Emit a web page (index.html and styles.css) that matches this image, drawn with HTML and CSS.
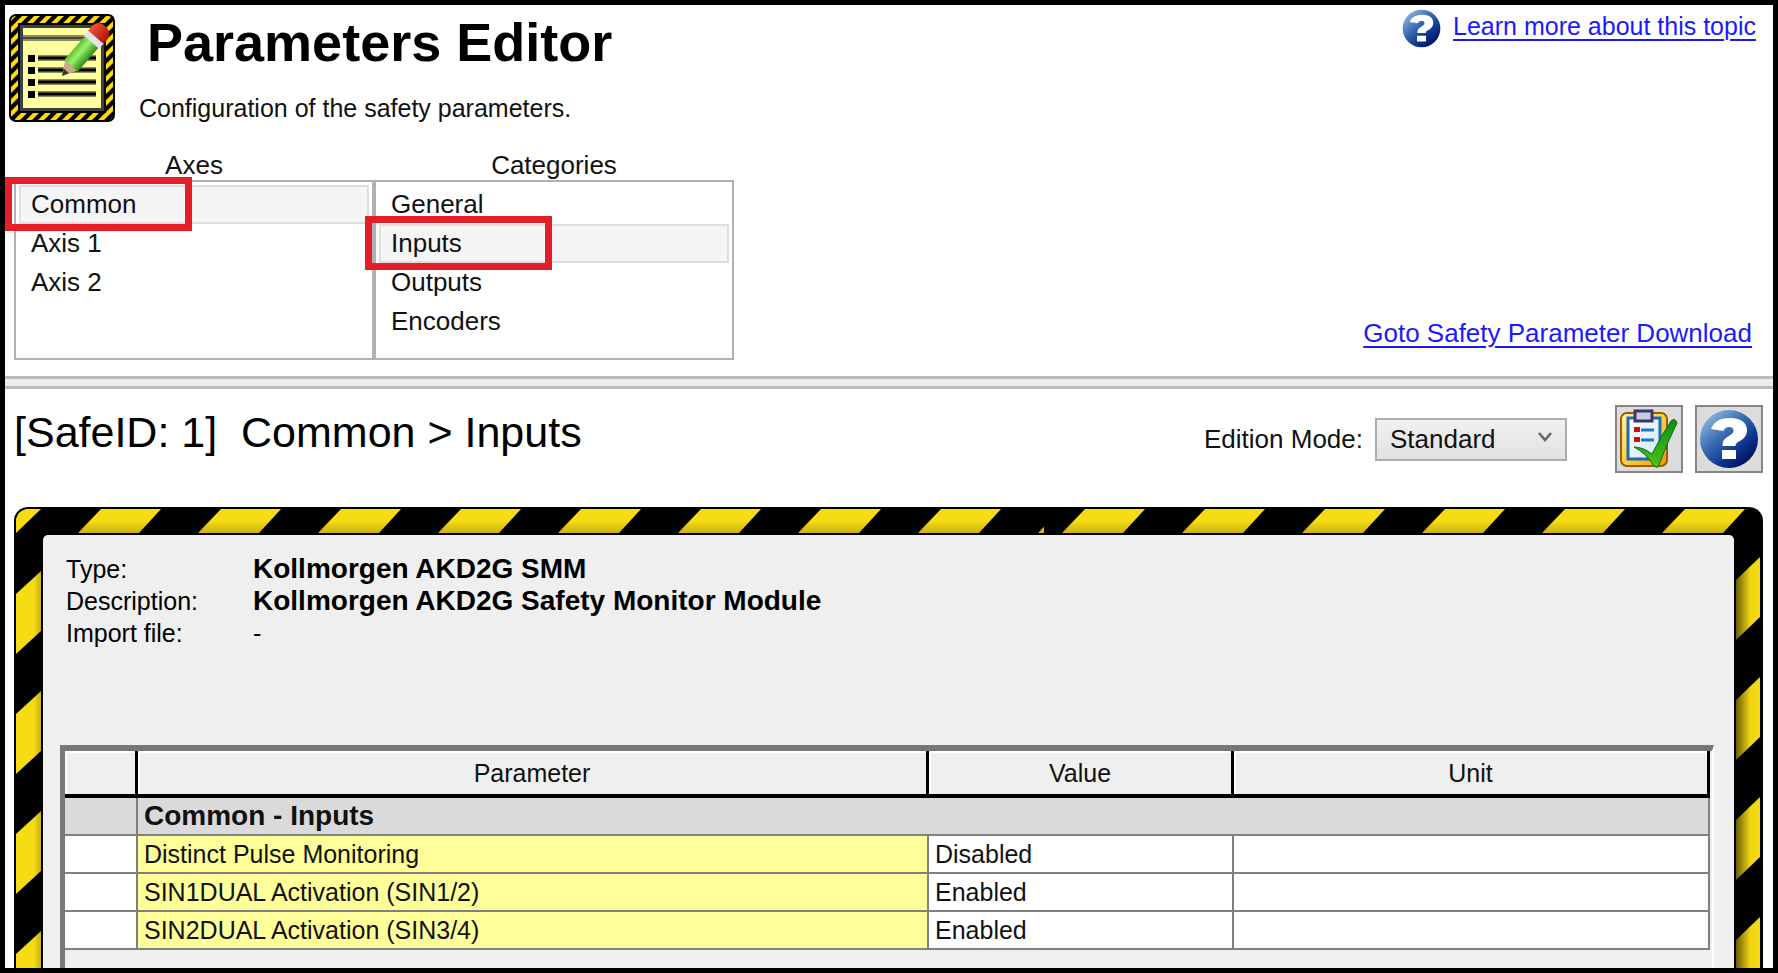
FILE: index.html
```html
<!DOCTYPE html>
<html lang="en">
<head>
<meta charset="utf-8">
<title>Parameters Editor</title>
<link rel="stylesheet" href="styles.css">
</head>
<body>
<svg class="defs" aria-hidden="true">
  <defs>
    <linearGradient id="ball" x1="0.1" y1="0.1" x2="0.8" y2="0.9">
      <stop offset="0" stop-color="#8db8e0"/><stop offset="0.4" stop-color="#3d6db4"/><stop offset="0.75" stop-color="#0d3490"/><stop offset="1" stop-color="#03145e"/>
    </linearGradient>
    <linearGradient id="shadeDown" x1="0" y1="0" x2="0" y2="1">
      <stop offset="0.5" stop-color="#f6dc14"/><stop offset="1" stop-color="#c9b010"/>
    </linearGradient>
    <linearGradient id="shadeEdge" x1="0" y1="0" x2="1" y2="0">
      <stop offset="0.7" stop-color="#f6dc14"/><stop offset="1" stop-color="#c9b010"/>
    </linearGradient>
    <linearGradient id="shadeRight" x1="0" y1="0" x2="1" y2="0">
      <stop offset="0" stop-color="#6a5c06"/><stop offset="0.6" stop-color="#f0d613"/><stop offset="1" stop-color="#f6dc14"/>
    </linearGradient>
    <pattern id="stripesTop" x="60" width="120" height="28" patternUnits="userSpaceOnUse">
      <path d="M4 26 27 2H87L65 26Z" fill="url(#shadeDown)"/>
    </pattern>
    <pattern id="stripesTopEnd" width="120" height="28" patternUnits="userSpaceOnUse">
      <path d="M18 26 41 2H101L79 26Z" fill="url(#shadeDown)"/>
    </pattern>
    <pattern id="stripesLeft" width="29" height="120" patternUnits="userSpaceOnUse">
      <path d="M2 59 27 36V96L2 119Z" fill="url(#shadeEdge)"/>
    </pattern>
    <pattern id="stripesRight" width="29" height="120" patternUnits="userSpaceOnUse">
      <path d="M2 45 26 22V82L2 105Z" fill="url(#shadeRight)"/>
    </pattern>
    <symbol id="help" viewBox="0 0 60 60">
      <circle cx="30" cy="30" r="29" fill="url(#ball)"/>
      <path d="M12 20C15 12 22 9 31 9C41 9 48 13 48 21C48 28 43 31 39 33C37 34.500 36.500 35.500 36.500 37H23.500C23.500 32 25 30 29 27.500C33 25 34.500 24 34.500 21.500C34.500 19 32.500 18 30 18C27 18 25.500 19.500 24.500 22ZM23 41H37V50H23Z" fill="#fff"/>
    </symbol>
    <pattern id="hazardMini" width="12" height="12" patternUnits="userSpaceOnUse">
      <rect width="12" height="12" fill="#000"/>
      <path d="M0 3 3 0H9L0 9ZM3 12 12 3V9L9 12Z" fill="#ffd80a"/>
    </pattern>
    <linearGradient id="pencil" x1="0" y1="0" x2="1" y2="0">
      <stop offset="0" stop-color="#5dc02c"/><stop offset="0.4" stop-color="#9bf26a"/><stop offset="1" stop-color="#2f8a18"/>
    </linearGradient>
    <linearGradient id="eraser" x1="0" y1="0" x2="1" y2="0">
      <stop offset="0" stop-color="#f0553a"/><stop offset="1" stop-color="#a81208"/>
    </linearGradient>
    <linearGradient id="board" x1="0" y1="0" x2="1" y2="1">
      <stop offset="0" stop-color="#fff3b0"/><stop offset="0.5" stop-color="#ffd23a"/><stop offset="1" stop-color="#e89a08"/>
    </linearGradient>
    <linearGradient id="paper" x1="0" y1="0" x2="1" y2="1">
      <stop offset="0" stop-color="#fff"/><stop offset="1" stop-color="#cfe6fa"/>
    </linearGradient>
    <linearGradient id="tick" x1="0" y1="0" x2="0" y2="1">
      <stop offset="0" stop-color="#0e8a14"/><stop offset="1" stop-color="#4cc41c"/>
    </linearGradient>
  </defs>
</svg>
<div class="window">
  <header class="top">
    <div class="intro">
      <svg class="logo" viewBox="0 0 106 108" aria-hidden="true">
        <rect width="106" height="108" rx="7" fill="#000"/>
        <rect x="2" y="2" width="102" height="104" rx="5" fill="url(#hazardMini)"/>
        <path d="M10 10H96V98H10Z" fill="#3f3f3f" stroke="#000" stroke-width="2"/>
        <path d="M14 14H92V94H14Z" fill="#ffffa0"/>
        <path d="M14 24H92M29 44H87M29 56H87M29 68H87M29 80H87" stroke="#8f8f5c" stroke-width="6"/>
        <path d="M14 24H92" stroke="#444" stroke-width="2"/>
        <path d="M29 44H87M29 56H87M29 68H87M29 80H87" stroke="#000" stroke-width="3"/>
        <path d="M19 41h7v7h-7zM19 53h7v7h-7zM19 65h7v7h-7zM19 77h7v7h-7z" fill="#000"/>
        <g transform="translate(53 62) rotate(41) scale(1.12)">
          <path d="M0 0-8-14H8Z" fill="#cba98a"/>
          <path d="M0 0-3-6H3Z" fill="#333"/>
          <path d="M-8-13V-41H8V-13Q4-11 0-13Q-4-11-8-13Z" fill="url(#pencil)"/>
          <path d="M-9-40V-47H9V-40Z" fill="#e4e4ea"/>
          <path d="M-9-46V-52Q-8-59 0-59Q8-59 9-52V-46Z" fill="url(#eraser)"/>
        </g>
      </svg>
      <div class="titles">
        <h1>Parameters Editor</h1>
        <p>Configuration of the safety parameters.</p>
      </div>
    </div>
    <a class="link learn" href="#help"><svg class="help-small" aria-hidden="true"><use href="#help"/></svg><span>Learn more about this topic</span></a>
    <div class="pickers">
      <section class="picker">
        <h2>Axes</h2>
        <ul>
          <li class="selected"><button type="button">Common</button><span class="callout"></span></li>
          <li><button type="button">Axis 1</button></li>
          <li><button type="button">Axis 2</button></li>
        </ul>
      </section>
      <section class="picker">
        <h2>Categories</h2>
        <ul>
          <li><button type="button">General</button></li>
          <li class="selected"><button type="button">Inputs</button><span class="callout"></span></li>
          <li><button type="button">Outputs</button></li>
          <li><button type="button">Encoders</button></li>
        </ul>
      </section>
    </div>
    <a class="link goto" href="#download">Goto Safety Parameter Download</a>
  </header>
  <div class="splitter"></div>
  <main>
    <div class="toolbar">
      <h2 class="crumb">[SafeID: 1]&nbsp; Common &gt; Inputs</h2>
      <label for="mode">Edition Mode:</label>
      <div class="select-wrap">
        <select id="mode"><option>Standard</option><option>Expert</option></select>
        <svg class="chevron" viewBox="0 0 16 14" aria-hidden="true"><path d="M2 2 8 9 14 2" fill="none" stroke="#666" stroke-width="2.500"/></svg>
      </div>
      <button class="tool" type="button" aria-label="Validate">
        <svg viewBox="0 0 60 60" aria-hidden="true">
          <rect x="2" y="4" width="46" height="53" rx="6" fill="url(#board)" stroke="#9a5a06" stroke-width="2"/>
          <rect x="9" y="9" width="32" height="41" fill="url(#paper)" stroke="#1c6ab8" stroke-width="3"/>
          <rect x="16" y="2" width="17" height="10" fill="#c9c9e2" stroke="#3b3867" stroke-width="3"/>
          <path d="M15 18h6v5h-6zM15 28h6v5h-6z" fill="#c41408"/>
          <path d="M22 21H35M22 31H35" stroke="#1c78c8" stroke-width="3"/>
          <path d="M15 38Q24 38 33 45Q42 27 52 12Q56 8 58 14Q48 34 39 58Q37 59 35 57Q27 44 15 38Z" fill="url(#tick)" stroke="#0b6a10"/>
        </svg>
      </button>
      <button class="tool" type="button" aria-label="Help"><svg viewBox="0 0 60 60" aria-hidden="true"><use href="#help"/></svg></button>
    </div>
    <section class="frame">
      <div class="band">
        <svg class="band-start" aria-hidden="true"><path d="M2 26V12Q4 4 12 2H27Z" fill="#f6dc14"/><rect x="60" width="100%" height="28" fill="url(#stripesTop)"/></svg>
        <svg class="band-end" aria-hidden="true"><rect width="100%" height="28" fill="url(#stripesTopEnd)"/></svg>
      </div>
      <div class="side"><svg aria-hidden="true"><rect width="29" height="100%" fill="url(#stripesLeft)"/></svg></div>
      <div class="panel">
        <dl class="facts">
          <dt>Type:</dt><dd><strong>Kollmorgen AKD2G SMM</strong></dd>
          <dt>Description:</dt><dd><strong>Kollmorgen AKD2G Safety Monitor Module</strong></dd>
          <dt>Import file:</dt><dd>-</dd>
        </dl>
        <div class="grid-box">
          <table>
            <colgroup><col class="c-mark"><col class="c-name"><col class="c-value"><col></colgroup>
            <thead><tr><th></th><th scope="col">Parameter</th><th scope="col">Value</th><th scope="col">Unit</th></tr></thead>
            <tbody>
              <tr class="group"><td></td><th scope="rowgroup" colspan="3">Common - Inputs</th></tr>
              <tr><td></td><td class="name">Distinct Pulse Monitoring</td><td>Disabled</td><td></td></tr>
              <tr><td></td><td class="name">SIN1DUAL Activation (SIN1/2)</td><td>Enabled</td><td></td></tr>
              <tr><td></td><td class="name">SIN2DUAL Activation (SIN3/4)</td><td>Enabled</td><td></td></tr>
            </tbody>
          </table>
        </div>
      </div>
      <div class="side"><svg aria-hidden="true"><rect width="29" height="100%" fill="url(#stripesRight)"/></svg></div>
    </section>
  </main>
</div>
</body>
</html>
```
FILE: styles.css
```css
* { box-sizing: border-box; }
body, h1, h2, p, ul, dl, dd { margin: 0; }
ul { padding: 0; }
body {
  font: 26px/32px "Liberation Sans", Arial, sans-serif;
  color: #111;
  background: #fff;
}
button, select { font: inherit; color: inherit; }
.defs { position: absolute; width: 0; height: 0; }
.window {
  display: flex;
  flex-direction: column;
  height: 100vh;
  border: 5px solid #000;
  overflow: hidden;
}

/* Header */
.top {
  display: grid;
  grid-template-columns: 1fr auto;
  padding: 4px 17px 16px 4px;
}
.intro { display: flex; gap: 24px; padding-top: 5px; }
.logo { width: 106px; height: 108px; }
h1 { padding-left: 8px; font-size: 54px; line-height: 56px; color: #000; }
.titles p { padding-top: 22px; font-size: 25px; }
.link { color: #1a1aff; text-decoration-thickness: 2px; text-underline-offset: 4px; }
.learn { display: flex; gap: 12px; align-self: start; justify-self: end; font-size: 25px; text-decoration: none; }
.learn span { padding-top: 1px; text-decoration: underline 2px; text-underline-offset: 4px; }
.help-small { width: 39px; height: 39px; }
.goto { align-self: end; justify-self: end; padding-right: 4px; margin-bottom: 11px; }
.pickers { display: flex; padding: 26px 0 0 5px; }
.picker { width: 360px; }
.picker h2 { font-size: 26px; font-weight: 400; line-height: 30px; text-align: center; }
.picker ul {
  height: 180px;
  padding: 3px 3px 0;
  border: 2px solid #b0b0b6;
  list-style: none;
}
.picker li { position: relative; height: 39px; border: 2px solid transparent; }
.picker .selected { border-color: #dedede; background: #f5f5f5; }
.picker button {
  display: block;
  width: 100%;
  padding: 0 10px;
  border: 0;
  background: none;
  line-height: 34px;
  text-align: left;
}
.callout {
  position: absolute;
  z-index: 1;
  top: -10px;
  left: -16px;
  width: 187px;
  height: 54px;
  border: 7px solid #e41e26;
  pointer-events: none;
}
.splitter { flex: none; height: 13px; border: solid #bcbcbc; border-width: 3px 0; background: #eee; }

/* Toolbar */
main { display: flex; flex: 1; flex-direction: column; min-height: 0; padding: 0 10px 0 9px; }
.toolbar { display: flex; align-items: center; padding: 16px 0 34px; }
.crumb { flex: 1; padding-bottom: 14px; font-size: 43px; font-weight: 400; line-height: 48px; color: #000; }
.toolbar label { padding-right: 12px; }
.select-wrap { position: relative; margin-right: 48px; }
select {
  width: 192px;
  height: 43px;
  padding: 0 13px;
  border: 2px solid #adadad;
  border-radius: 0;
  background: linear-gradient(#f0f0f0, #e2e2e2);
  appearance: none;
}
.chevron { position: absolute; top: 13px; right: 14px; width: 16px; height: 14px; pointer-events: none; }
.tool {
  display: grid;
  place-items: center;
  width: 68px;
  height: 68px;
  padding: 0;
  border: 2px solid #868686;
  background: #dcdcdc;
}
.tool + .tool { margin-left: 12px; }
.tool svg { width: 60px; height: 60px; }

/* Hazard frame */
.frame {
  display: grid;
  flex: 1;
  grid-template-columns: 29px 1fr 29px;
  grid-template-rows: 28px 1fr;
  min-height: 0;
  border-radius: 14px 14px 0 0;
  background: #000;
  overflow: hidden;
}
.band { display: flex; grid-column: 1 / -1; }
.band svg, .side svg { display: block; height: 100%; }
.band-start { flex: 1; min-width: 0; }
.band-end { flex: none; width: 719px; }
.side { min-height: 0; }
.side svg { width: 29px; }
.panel {
  display: flex;
  flex-direction: column;
  min-height: 0;
  padding: 18px 20px 0 17px;
  border-radius: 5px 5px 0 0;
  background: #efefef;
}
.facts { display: grid; grid-template-columns: 187px 1fr; padding-left: 6px; font-size: 25px; color: #000; }
.facts strong { font-size: 28px; }

/* Parameter grid */
.grid-box {
  flex: 1;
  padding-right: 2px;
  margin-top: 96px;
  border: solid #777;
  border-width: 6px 2px 0 5px;
  border-right-color: #fff;
}
table { width: 100%; table-layout: fixed; border-collapse: separate; border-spacing: 0; font-size: 25px; line-height: 30px; }
.c-mark { width: 73px; }
.c-name { width: 791px; }
.c-value { width: 305px; }
th, td { height: 38px; padding: 0 6px; border: solid #808080; border-width: 0 2px 2px 0; text-align: left; }
td { background: #fff; }
thead th {
  height: 47px;
  border-width: 0 3px 4px 0;
  border-color: #000;
  background: #efefef;
  box-shadow: inset 2px 2px #fff;
  font-weight: 400;
  text-align: center;
}
.group td, .group th { background: #dadada; }
.group th { font-size: 28px; }
.name { background: #ffff99; }
```
